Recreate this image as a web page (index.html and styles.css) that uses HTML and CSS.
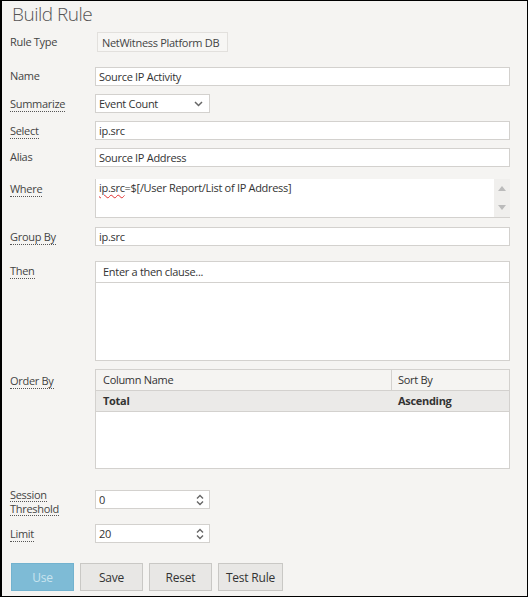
FILE: index.html
```html
<!DOCTYPE html>
<html lang="en">
<head>
  <meta charset="UTF-8">
  <title>Build Rule</title>
  <link rel="stylesheet" href="styles.css">
</head>
<body>
  <div class="panel">
    <h1 class="title">Build Rule</h1>

    <div class="row row-type">
      <span class="label">Rule Type</span>
      <div class="readonly">NetWitness Platform DB</div>
    </div>

    <div class="row">
      <span class="label">Name</span>
      <div class="field">Source IP Activity</div>
    </div>

    <div class="row">
      <span class="label tip">Summarize</span>
      <div class="field short select">Event Count
        <svg class="chev" width="9" height="6" viewBox="0 0 9 6"><path d="M1 1l3.5 3.5L8 1" fill="none" stroke="#666" stroke-width="1.5"/></svg>
      </div>
    </div>

    <div class="row">
      <span class="label tip">Select</span>
      <div class="field">ip.src</div>
    </div>

    <div class="row row-gap">
      <span class="label">Alias</span>
      <div class="field">Source IP Address</div>
    </div>

    <div class="row">
      <span class="label tip">Where</span>
      <div class="field area">
        <div class="area-text"><span class="misspelt">ip.src</span>=$[/User Report/List of IP Address]</div>
        <div class="scrollbar">
          <svg width="8" height="5" viewBox="0 0 8 5"><path d="M0 5L4 0L8 5Z" fill="#bbb"/></svg>
          <svg width="8" height="5" viewBox="0 0 8 5"><path d="M0 0L4 5L8 0Z" fill="#bbb"/></svg>
        </div>
      </div>
    </div>

    <div class="row row-group">
      <span class="label tip">Group By</span>
      <div class="field">ip.src</div>
    </div>

    <div class="row">
      <span class="label tip">Then</span>
      <div class="then-box">
        <div class="then-input">Enter a then clause...</div>
      </div>
    </div>

    <div class="row row-order">
      <span class="label tip">Order By</span>
      <div class="order-table">
        <div class="order-head">
          <div class="col-name">Column Name</div>
          <div class="col-sort">Sort By</div>
        </div>
        <div class="order-row">
          <div class="col-name">Total</div>
          <div class="col-sort">Ascending</div>
        </div>
      </div>
    </div>

    <div class="row row-session">
      <span class="label two-line"><span class="tip-line">Session</span><span class="tip-line">Threshold</span></span>
      <div class="field short spin">0
        <svg class="spinner" width="8" height="12" viewBox="0 0 8 12"><path d="M1 4.5L4 1.5L7 4.5M1 7.5L4 10.5L7 7.5" fill="none" stroke="#666" stroke-width="1.4"/></svg>
      </div>
    </div>

    <div class="row row-limit">
      <span class="label tip">Limit</span>
      <div class="field short spin">20
        <svg class="spinner" width="8" height="12" viewBox="0 0 8 12"><path d="M1 4.5L4 1.5L7 4.5M1 7.5L4 10.5L7 7.5" fill="none" stroke="#666" stroke-width="1.4"/></svg>
      </div>
    </div>

    <div class="buttons">
      <button class="btn btn-primary" disabled>Use</button>
      <button class="btn">Save</button>
      <button class="btn">Reset</button>
      <button class="btn">Test Rule</button>
    </div>
  </div>
</body>
</html>
```

FILE: styles.css
```css
:root {
  --bg: #f5f4f2;
  --border: #d3d1ce;
  --text: #333;
  --label: #444;
  --primary: #7ebbd6;
}

html, body {
  margin: 0;
  padding: 0;
}

body {
  font-family: 'Open Sans', sans-serif;
  font-size: 11px;
  letter-spacing: -0.3px;
  color: var(--text);
  background: #000;
}

.panel {
  box-sizing: border-box;
  width: 528px;
  height: 597px;
  background: var(--bg);
  border: 1px solid #000;
  border-left-width: 2px;
  padding: 0 17px 0 8px;
}

.title {
  margin: 0;
  padding: 0 0 0 2px;
  font-size: 19px;
  font-weight: 300;
  letter-spacing: -0.5px;
  line-height: 27px;
  color: #555;
}

.row {
  display: grid;
  grid-template-columns: 85px 1fr;
  margin-bottom: 8px;
}

.label {
  padding-top: 2px;
  line-height: 14px;
  color: var(--label);
  justify-self: start;
}

.label.tip {
  border-bottom: 1px dotted #555;
  align-self: start;
  padding-top: 1px;
  margin-top: 2px;
}

.two-line {
  display: flex;
  flex-direction: column;
  align-items: flex-start;
  padding-top: 0;
  margin-top: -2px;
  margin-bottom: -12px;
}

.tip-line {
  line-height: 13px;
  border-bottom: 1px dotted #555;
}

.row-type {
  margin-top: 4px;
  margin-bottom: 15px;
}

.row-type .label {
  padding-top: 3px;
}

.readonly {
  box-sizing: border-box;
  width: 131px;
  height: 20px;
  margin-left: 2px;
  padding: 2px 4px;
  line-height: 15px;
  white-space: nowrap;
  overflow: hidden;
  border: 1px solid #e2e0dd;
  background: #f7f6f4;
  color: #444;
}

.field {
  position: relative;
  box-sizing: border-box;
  height: 19px;
  padding: 1px 3px;
  line-height: 15px;
  background: #fff;
  border: 1px solid var(--border);
  color: var(--text);
}

.field.short {
  width: 115px;
}

.chev {
  position: absolute;
  right: 6px;
  top: 6px;
}

.spinner {
  position: absolute;
  right: 5px;
  top: 3px;
}

.row-gap {
  margin-bottom: 12px;
}

.area {
  height: 39px;
  display: flex;
  padding: 0;
  border-right: none;
  border-top: none;
}

.area-text {
  flex: 1;
  padding: 1px 3px;
}

.misspelt {
  text-decoration: underline wavy #e03030;
  text-decoration-thickness: 1px;
  text-underline-offset: 2px;
}

.scrollbar {
  width: 16px;
  background: #f0efed;
  display: flex;
  flex-direction: column;
  justify-content: space-between;
  align-items: center;
  padding: 7px 0 7px;
}

.row-group {
  margin-top: 9px;
  margin-bottom: 15px;
}

.then-box {
  box-sizing: border-box;
  height: 100px;
  background: #fff;
  border: 1px solid var(--border);
}

.then-input {
  height: 20px;
  line-height: 20px;
  padding-left: 7px;
  border-bottom: 1px solid var(--border);
}

.row-order {
  margin-bottom: 21px;
}

.row-order .label {
  margin-top: 4px;
}

.order-table {
  box-sizing: border-box;
  height: 100px;
  background: #fff;
  border: 1px solid var(--border);
}

.order-head, .order-row {
  display: grid;
  grid-template-columns: 295px 1fr;
  height: 20px;
  line-height: 20px;
  border-bottom: 1px solid var(--border);
}

.order-head {
  background: var(--bg);
}

.order-head .col-sort {
  border-left: 1px solid var(--border);
}

.order-row {
  background: #ebeae8;
  font-weight: bold;
}

.col-name {
  padding-left: 7px;
}

.col-sort {
  padding-left: 6px;
}

.order-row .col-sort {
  padding-left: 7px;
}

.row-session {
  margin-bottom: 15px;
}

.row-limit {
  margin-bottom: 20px;
}

.buttons {
  display: flex;
  gap: 6px;
  padding-left: 1px;
}

.btn {
  box-sizing: border-box;
  width: 63px;
  height: 28px;
  padding: 0;
  font-family: 'Open Sans', sans-serif;
  font-size: 12px;
  letter-spacing: -0.2px;
  color: #333;
  background: #e8e7e5;
  border: 1px solid #c9c8c5;
  border-radius: 0;
}

.btn:last-child {
  width: 65px;
}

.btn-primary {
  background: var(--primary);
  border-color: #72b2cf;
  color: #c9e4ef;
}
```
